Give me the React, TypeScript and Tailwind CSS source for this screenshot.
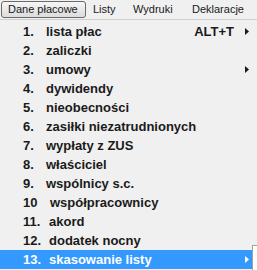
import React from "react";

type Item = { n: string; label: string; w: string; shortcut?: string; arrow?: boolean; active?: boolean };

const items: Item[] = [
  { n: "1.", label: "lista płac", w: "w-[23px]", shortcut: "ALT+T", arrow: true },
  { n: "2.", label: "zaliczki", w: "w-[23px]" },
  { n: "3.", label: "umowy", w: "w-[23px]", arrow: true },
  { n: "4.", label: "dywidendy", w: "w-[23px]" },
  { n: "5.", label: "nieobecności", w: "w-[23px]" },
  { n: "6.", label: "zasiłki niezatrudnionych", w: "w-[23px]" },
  { n: "7.", label: "wypłaty z ZUS", w: "w-[23px]" },
  { n: "8.", label: "właściciel", w: "w-[23px]" },
  { n: "9.", label: "wspólnicy s.c.", w: "w-[23px]" },
  { n: "10", label: "współpracownicy", w: "w-[27px]" },
  { n: "11.", label: "akord", w: "w-[26px]" },
  { n: "12.", label: "dodatek nocny", w: "w-[26px]" },
  { n: "13.", label: "skasowanie listy", w: "w-[26px]", arrow: true, active: true },
];

function Arrow({ white }: { white?: boolean }) {
  return (
    <svg width="4" height="7" viewBox="0 0 4 7" className="block">
      <polygon points="0,0 4,3.5 0,7" fill={white ? "#ffffff" : "#1a1a1a"} />
    </svg>
  );
}

export default function App() {
  return (
    <div
      className="relative w-[257px] h-[270px] overflow-hidden bg-[#f0f0f0] text-[#1a1a1a]"
      style={{ fontFamily: '"Liberation Sans", Arial, sans-serif' }}
    >
      <div className="flex items-start h-[19px] text-[11px] leading-none">
        <div className="ml-[1px] mt-[1px] w-[85px] h-[17px] flex items-center pl-[6px] rounded-[3px] border border-[#6a6a6a] bg-gradient-to-b from-[#f6f6f6] to-[#dcdcdc]">
          Dane płacowe
        </div>
        <div className="h-[19px] flex items-center pl-[7px] w-[40px]">Listy</div>
        <div className="h-[19px] flex items-center pl-[7px] w-[58px]">Wydruki</div>
        <div className="h-[19px] flex items-center pl-[8px]">Deklaracje</div>
      </div>
      <div className="h-[1px] w-full bg-[#d0d0d0]" />
      <div className="w-[252px] pt-[2px] text-[13px] font-bold leading-none">
        {items.map((it) => (
          <div
            key={it.n}
            className={
              it.active
                ? "flex items-center h-[19px] pl-[23px] pr-[3px] bg-[#3399ff] text-white"
                : "flex items-center h-[19px] pl-[23px] pr-[3px]"
            }
          >
            <span className={it.w + " shrink-0"}>{it.n}</span>
            <span className="flex-1 whitespace-nowrap">{it.label}</span>
            {it.shortcut && <span className="whitespace-nowrap">{it.shortcut}</span>}
            {it.arrow && (
              <span className="ml-[11px] w-[4px] flex items-center">
                <Arrow white={it.active} />
              </span>
            )}
          </div>
        ))}
      </div>
      <div className="absolute left-[252px] top-[245px] w-[5px] h-[25px] border-l border-t border-[#a0a0a0] bg-white" />
    </div>
  );
}
